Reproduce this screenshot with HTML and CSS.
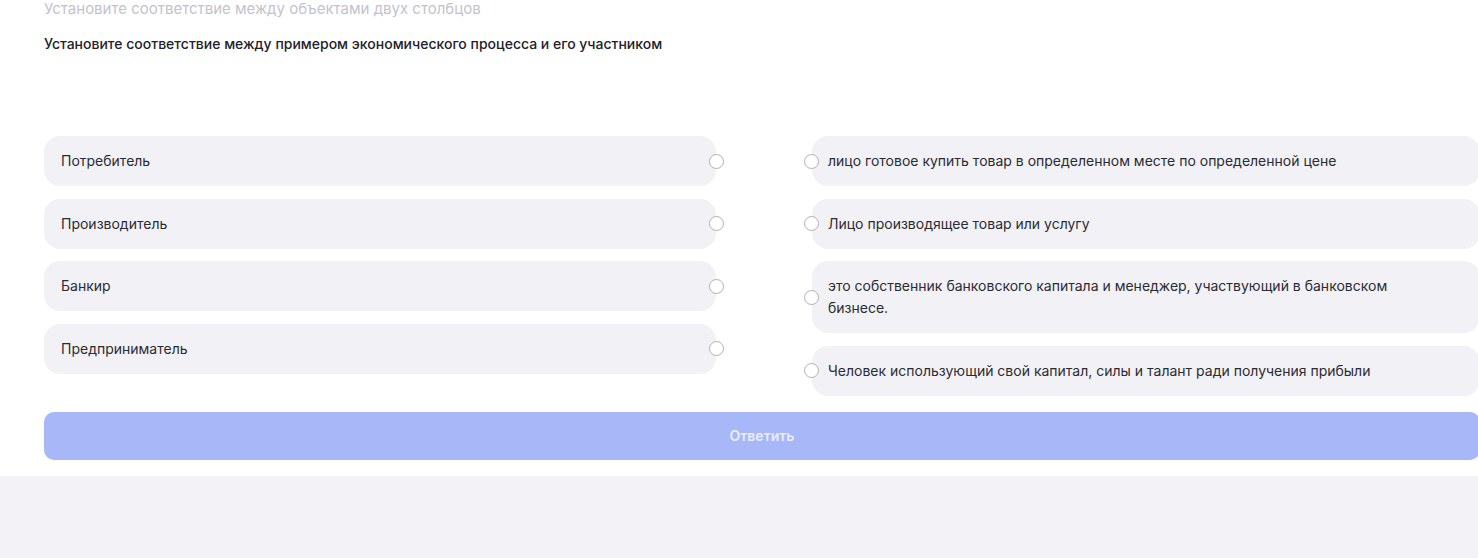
FILE: index.html
```
<!DOCTYPE html>
<html lang="ru">
<head>
    <meta charset="UTF-8">
    <meta name="viewport" content="width=device-width, initial-scale=1.0">
    <title>Соответствие</title>
    <link rel="stylesheet" href="styles.css">
</head>
<body>

<div class="panel">
    <p class="task-type">Установите соответствие между объектами двух столбцов</p>
    <p class="task-title">Установите соответствие между примером экономического процесса и его участником</p>

    <div class="match">
        <div class="column">
            <div class="item item-left">
                <span class="item-text">Потребитель</span>
                <span class="radio"></span>
            </div>
            <div class="item item-left">
                <span class="item-text">Производитель</span>
                <span class="radio"></span>
            </div>
            <div class="item item-left">
                <span class="item-text">Банкир</span>
                <span class="radio"></span>
            </div>
            <div class="item item-left">
                <span class="item-text">Предприниматель</span>
                <span class="radio"></span>
            </div>
        </div>

        <div class="column">
            <div class="item item-right">
                <span class="radio"></span>
                <span class="item-text">лицо готовое купить товар в определенном месте по определенной цене</span>
            </div>
            <div class="item item-right">
                <span class="radio"></span>
                <span class="item-text">Лицо производящее товар или услугу</span>
            </div>
            <div class="item item-right">
                <span class="radio"></span>
                <span class="item-text">это собственник банковского капитала и менеджер, участвующий в банковском бизнесе.</span>
            </div>
            <div class="item item-right">
                <span class="radio"></span>
                <span class="item-text">Человек использующий свой капитал, силы и талант ради получения прибыли</span>
            </div>
        </div>
    </div>

    <button type="button" class="answer-btn">Ответить</button>
</div>

</body>
</html>
```

FILE: styles.css
```
body {
    font-family: 'Inter', 'Noto Sans', sans-serif;
    background-color: #f2f2f7;
    color: #2b2b33;
    margin: 0;
    padding: 0;
    overflow: hidden;
}

.panel {
    background-color: #ffffff;
    width: 1436px;
    padding: 0 0 16px 44px;
}

.task-type {
    margin: 0;
    font-size: 15px;
    line-height: 18px;
    color: #c3c3cd;
}

.task-title {
    margin: 17px 0 0;
    font-size: 14px;
    line-height: 18px;
    font-weight: 500;
    color: #22222a;
}

.match {
    display: grid;
    grid-template-columns: 672px 1fr;
    column-gap: 96px;
    margin-top: 83px;
}

.column {
    display: flex;
    flex-direction: column;
    gap: 12.5px;
}

.item {
    display: flex;
    align-items: center;
    background-color: #f2f2f6;
    border-radius: 16px;
    min-height: 50px;
    box-sizing: border-box;
    padding: 14px 0;
    font-size: 14px;
    line-height: 22px;
}

.item-left {
    padding-left: 17px;
}

.item-left .item-text {
    flex: 1;
}

.item-left .radio {
    margin-right: -8px;
}

.item-right {
    padding-right: 60px;
}

.item-right .radio {
    margin-left: -8px;
    margin-right: 9px;
}

.radio {
    flex-shrink: 0;
    width: 15px;
    height: 15px;
    box-sizing: border-box;
    border: 1.5px solid #b0b0b4;
    border-radius: 50%;
    background-color: #ffffff;
}

.answer-btn {
    display: block;
    width: 100%;
    height: 48px;
    margin-top: 16px;
    border: none;
    border-radius: 10px;
    background-color: #a7b7f7;
    color: #e9edff;
    font-family: 'Inter', 'Noto Sans', sans-serif;
    font-size: 14px;
    font-weight: 600;
}
```
